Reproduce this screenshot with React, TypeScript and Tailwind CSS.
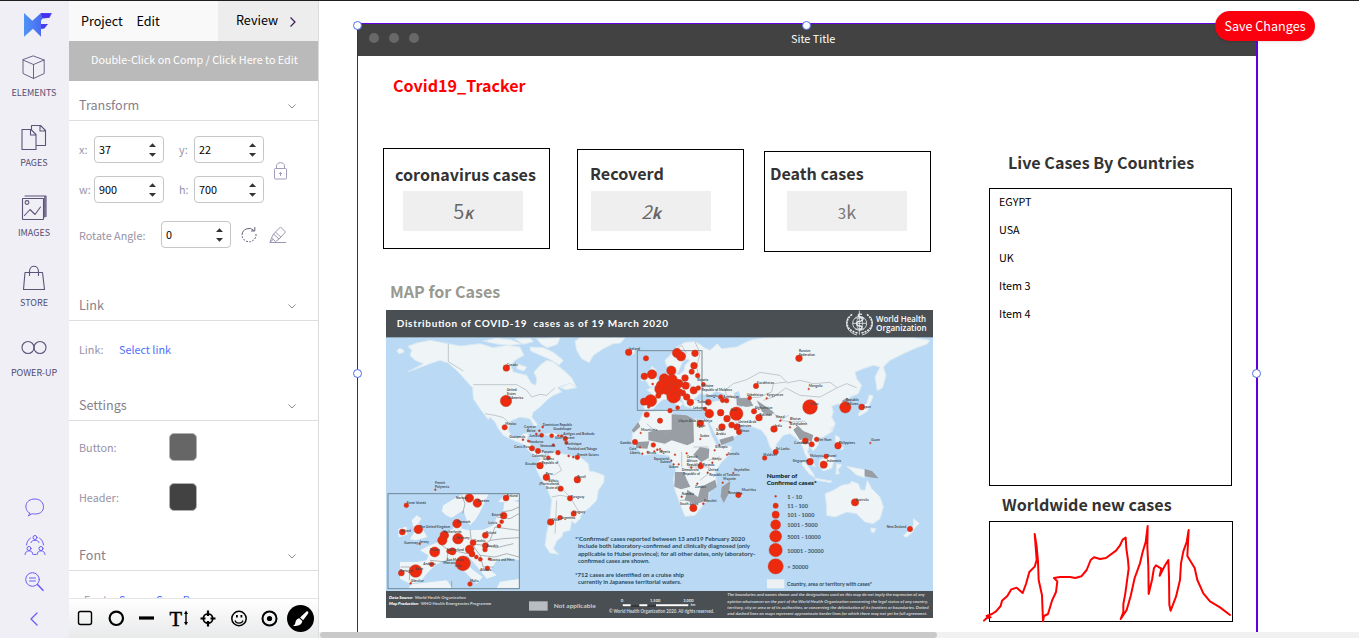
import type { ReactNode } from "react";

const FONT = "font-['Noto_Sans_CJK_SC','Noto_Sans',sans-serif]";

/* ---------- Sidebar ---------- */

function Logo() {
  return (
    <svg width="30" height="26" viewBox="0 0 90 78" className="ml-[6px] block">
      <defs>
        <linearGradient id="lg" x1="0" x2="1">
          <stop offset="0" stopColor="#4f93f5" />
          <stop offset=".6" stopColor="#4a6cf2" />
          <stop offset="1" stopColor="#4f8ff5" />
        </linearGradient>
      </defs>
      <path d="M3 3 L28 26 L44 12 L54 3 H87 L80 17 L58 20 L54 26 V36 H75 L64 50 L54 52 V74 L30 50 L3 74Z" fill="url(#lg)" />
      <path d="M54 4h31l-7 13H58z" fill="#4a2cf0" />
      <path d="M54 36h20l-10 12H54z" fill="#4a3cf2" />
    </svg>
  );
}

const ink = { fill: "none", stroke: "#5d5378", strokeWidth: 1.1, strokeLinejoin: "round", strokeLinecap: "round" } as const;

const NAV: { label: string; icon: ReactNode }[] = [
  {
    label: "ELEMENTS",
    icon: <path {...ink} strokeWidth=".9" d="M13.500 2 24.200 6V19.500L13.500 24.500 3 19.500V6ZM3 6 13.500 10.500 24.200 6M13.500 10.500V24.500" />,
  },
  {
    label: "PAGES",
    icon: (
      <path {...ink} d="M2 5.500H11L16 10.500V25.500H2ZM10.500 5.500V11H16M11.500 5V1.500H20.500L25.500 6.500V21.500H17M20 1.500V7H25.500" />
    ),
  },
  {
    label: "IMAGES",
    icon: (
      <g {...ink}>
        <rect x="2.500" y="4.500" width="21" height="21" rx=".5" />
        <path d="M5 2H26V22.500M24.700 3V23M4.500 21.500 10 15.500l5 5L20.500 13" />
        <circle cx="7" cy="8.500" r="1.900" />
      </g>
    ),
  },
  {
    label: "STORE",
    icon: <path {...ink} d="M5 8.500H22.500L24.500 25.500H3.500ZM9.500 11.500V7.500C9.500.500 18.500.500 18.500 7.500V11.500" />,
  },
  {
    label: "POWER-UP",
    icon: (
      <g {...ink}>
        <circle cx="8" cy="13.500" r="6" />
        <circle cx="20" cy="13.500" r="6" />
      </g>
    ),
  },
];

const blue = { fill: "none", stroke: "#6a5cf5", strokeWidth: 1, strokeLinejoin: "round", strokeLinecap: "round" } as const;

function Sidebar() {
  return (
    <aside className="flex w-[69px] shrink-0 flex-col items-center bg-[#f0eff6]">
      <div className="h-[50px] pt-[11px]">
        <Logo />
      </div>
      {NAV.map((n) => (
        <div key={n.label} className="flex h-[70px] w-full flex-col items-center pt-[3px] pr-[2px]">
          <svg width="28" height="28" viewBox="0 0 28 28">
            {n.icon}
          </svg>
          <span className="mt-[3px] pl-[1px] text-[9px] leading-[16px] text-[#554b70]">{n.label}</span>
        </div>
      ))}
      <div className="mt-auto flex flex-col items-center pb-[8px]">
        <svg width="22" height="22" viewBox="0 0 22 22" className="mb-[15px]">
          <path {...blue} d="M5.500 16.200C-.500 12.500.500 2 11 2c10.500 0 12 15 .5 15-1.800 0-3-.3-3.500-.3L4 19c1-.9 1.600-1.600 1.500-2.800Z" />
        </svg>
        <svg width="22" height="22" viewBox="0 0 22 22" className="mb-[15px] ml-px">
          <g {...blue}>
            <circle cx="11" cy="3.500" r="2" />
            <circle cx="5" cy="14.500" r="2" />
            <circle cx="17" cy="14.500" r="2" />
            <path d="M7 8.500c0-3 8-3 8 0M1 20.500c0-5 8-5 8 0M13 20.500c0-5 8-5 8 0M10 20.500h2M2.500 11C3 7 5 5 6.500 4M19.500 11c-.5-4-2.500-6-4-7" />
          </g>
        </svg>
        <svg width="22" height="22" viewBox="0 0 22 22" className="mb-[15px]">
          <g {...blue}>
            <circle cx="8.500" cy="8.500" r="6.800" />
            <path d="M5.500 7h6M5.500 10h6" />
            <path d="M13.500 13.500 19 19.300" strokeWidth="1.600" />
          </g>
        </svg>
        <svg width="22" height="22" viewBox="0 0 22 22">
          <path {...blue} strokeWidth="1.300" d="M13 5 7 11l6 6" />
        </svg>
      </div>
    </aside>
  );
}

/* ---------- Property panel ---------- */

function Section({ title }: { title: string }) {
  return (
    <div className="flex h-[40px] items-center justify-between border-b border-[#dedede] pt-[9px] pr-[21px] pl-[10px]">
      <span className="text-[12.600px] leading-[18px] text-[#85818c]">{title}</span>
      <svg width="10" height="8" viewBox="0 0 10 8" className="mt-px">
        <path d="M1.500 2.500 5 6 8.500 2.500" fill="none" stroke="#8d8a98" />
      </svg>
    </div>
  );
}

function Num({ value }: { value: string }) {
  return (
    <div className="flex h-[27px] w-[70px] items-center justify-between rounded-[4px] border border-[#c6c6c6] bg-white pr-[6px] pl-[4px]">
      <span className="text-[10.800px] text-black">{value}</span>
      <svg width="9" height="16" viewBox="0 0 9 16">
        <path d="M4.500 1.200 8 5H1ZM4.500 14.800 8 11H1Z" fill="#333" />
      </svg>
    </div>
  );
}

function Label({ children, className = "" }: { children: ReactNode; className?: string }) {
  return <span className={"text-[10.800px] leading-[16px] text-[#9793a8] " + className}>{children}</span>;
}

function Toolbar() {
  return (
    <div className="absolute bottom-0 left-0 flex h-[40px] w-[249px] items-start border-t border-[#e4e4e4] bg-linear-to-b from-white to-[#e8e9ea]">
      <svg width="249" height="39" viewBox="69 599 249 39">
        <g fill="none" stroke="#000">
          <rect x="78.500" y="611.500" width="13" height="13" rx="2" strokeWidth="1.400" />
          <circle cx="116.300" cy="618.300" r="6.700" strokeWidth="2.200" />
          <path d="M139 618h15" strokeWidth="3.200" />
          <path d="M186 612v12" strokeWidth="1.400" />
          <circle cx="208" cy="618.500" r="4.700" strokeWidth="1.700" />
          <path d="M208 610.500v5.500M208 621v5.500M200.500 618.500h5M210.500 618.500h5" strokeWidth="2.200" />
          <circle cx="239" cy="618.500" r="7.200" strokeWidth="1.500" />
          <path d="M235 620.500c1 3.500 7 3.500 8 0" strokeWidth="1.200" />
          <circle cx="269.500" cy="618.500" r="7" strokeWidth="2" />
        </g>
        <path d="M186 610.500l2 3.500h-4zM186 625.500l2-3.500h-4zM236 615h1.800v2.500H236zM240.500 615h1.800v2.500h-1.800z" />
        <circle cx="269.500" cy="618.500" r="2.600" />
        <text x="169.500" y="625.500" fontSize="20.500" fontFamily="Liberation Serif" stroke="#000" strokeWidth=".5">T</text>
        <circle cx="300.500" cy="618.500" r="13.500" />
        <path d="M307.800 611.500c1 .8.600 1.600 0 2.500l-4.700 6.200-3-2.700 5.800-5.500c.7-.6 1.200-.9 1.900-.5ZM299.300 618.200l3 2.900c0 3-3.800 5.800-9.300 4.700 2.800-1 2-3 3.100-5.200.7-1.300 1.800-2.200 3.200-2.400Z" fill="#fff" />
      </svg>
    </div>
  );
}

function Panel() {
  return (
    <section className="relative h-full w-[250px] shrink-0 overflow-hidden border-r border-[#dcdcdc] bg-white">
      <div className="flex h-[40px] bg-[#f9f9f9] text-[12.600px] text-black">
        <span className="w-[55px] pt-[10px] pl-[12px] leading-[20px]">Project</span>
        <span className="w-[94px] pt-[10px] pl-[12.500px] leading-[20px]">Edit</span>
        <div className="flex flex-1 items-start bg-[#ededed] pt-[9px] pl-[18px] leading-[20px]">
          Review
          <svg width="8" height="12" viewBox="0 0 8 12" className="mt-[6px] ml-[11px]">
            <path d="M1.500 1.500 6 6l-4.500 4.500" fill="none" stroke="#3d1a5c" strokeWidth="1.200" />
          </svg>
        </div>
      </div>
      <div className="flex h-[40px] items-center bg-[#bababa] pb-px pl-[22px] text-[10.750px] whitespace-nowrap text-white">
        <span>Double-Click on Comp / Click Here to Edit</span>
      </div>
      <Section title="Transform" />
      <div className="relative h-[160px] pt-[15px] pl-[10px]">
        <div className="flex h-[27px] items-center">
          <Label className="w-[15px] pb-[2px]">x:</Label>
          <Num value="37" />
          <Label className="ml-[15px] w-[15px] pb-[2px]">y:</Label>
          <Num value="22" />
        </div>
        <div className="mt-[13px] flex h-[27px] items-center">
          <Label className="w-[15px] pb-[2px]">w:</Label>
          <Num value="900" />
          <Label className="ml-[15px] w-[15px] pb-[2px]">h:</Label>
          <Num value="700" />
        </div>
        <div className="mt-[18px] flex h-[27px] items-center">
          <Label className="w-[82px] pt-[1px]">Rotate Angle:</Label>
          <Num value="0" />
          <svg width="18" height="18" viewBox="0 0 18 18" className="ml-[9px]" fill="none" stroke="#66637a">
            <path d="M2 9a7 7 0 0 1 12-4.500M14.800 1V5H11" />
            <path d="M16 8a7 7 0 0 1-14 1.500" strokeDasharray="2 1.200" />
          </svg>
          <svg width="18" height="18" viewBox="0 0 18 18" className="ml-[11px]" fill="none" stroke="#9b96b2">
            <path d="M11.500 1 16.500 6 10 13 4.500 8ZM6.500 6.200 12 11.200M4.500 8 2.500 12l4 3.500L10 13M2.500 12 .800 16.500h16.500M1 16.200 4.500 13" />
          </svg>
        </div>
        <svg width="15" height="20" viewBox="0 0 15 20" className="absolute top-[40px] left-[204px]" fill="none" stroke="#a29dba">
          <rect x="1.500" y="7.500" width="12" height="10.500" rx="1" />
          <path d="M3.500 7.500V5C3.500.500 11.500.500 11.500 5v2.500M7.500 11v4M6 12.500h3" />
        </svg>
      </div>
      <Section title="Link" />
      <div className="flex h-[60px] items-start pt-[20px] pl-[10px]">
        <Label className="w-[40px]">Link:</Label>
        <span className="text-[10.800px] leading-[16px] text-[#4c6fff]">Select link</span>
      </div>
      <Section title="Settings" />
      <div className="h-[110px] pt-[12px] pl-[10px]">
        <div className="flex h-[28px] items-center">
          <Label className="w-[90px]">Button:</Label>
          <div className="size-[28px] rounded-[5px] border border-[#b0b0b0] bg-[#666]" />
        </div>
        <div className="mt-[22px] flex h-[28px] items-center">
          <Label className="w-[90px]">Header:</Label>
          <div className="size-[28px] rounded-[5px] border border-[#b0b0b0] bg-[#424242]" />
        </div>
      </div>
      <Section title="Font" />
      <div className="flex items-start pt-[20px] pl-[15px]">
        <Label className="w-[35px]">Font:</Label>
        <span className="text-[10.800px] leading-[16px] text-[#4c6fff]">Source Sans Pro</span>
      </div>
      <Toolbar />
    </section>
  );
}

/* ---------- World map ---------- */

const LAND = [
  "M50 152l8-8 12 4 2 8-14 4zM95 150L84 138 110 128 150 120 205 130 240 137 300 130 340 142 380 135 420 140 432 165 405 180 392 195 400 215 440 225 455 250 468 255 470 235 462 215 480 195 500 180 520 185 545 205 560 218 575 233 590 262 560 252 532 262 545 275 520 285 500 300 480 320 460 335 455 350 472 372 465 382 450 355 420 350 390 362 385 390 395 410 415 415 430 400 447 398 440 420 452 432 455 450 475 458 490 455 500 470 488 480 475 470 450 455 430 432 400 420 370 405 355 385 345 365 330 350 325 358 315 345 300 325 280 295 278 262 262 245 235 215 205 188 180 180 150 190 110 205 85 214 130 190 105 180 90 165z",
  "M470 488L490 470 520 455 545 460 580 468 600 470 625 490 628 512 645 515 672 525 672 545 655 570 650 600 630 620 605 640 600 655 585 670 575 662 570 690 550 695 545 710 530 722 520 745 536 762 510 758 495 735 500 700 510 650 515 600 500 560 480 530 468 505z",
  "M585 122L600 112 735 112 722 128 700 130 670 145 640 165 628 187 605 175 590 150z",
  "M310 122l40-8 45 5 30 12-35 4-40-4zM405 116l45-2 10 10-30 8zM470 115l70-3-8 20-30 10-20-12zM450 140l40 2 30 14 30 24-12 14-30-18-34-14-22-10zM410 190l30 10-8 12-20-6zM540 262l30-14 18 14-30 6z",
  "M734 158l14-10 16 2-2 10-18 6z",
  "M795 235l10-12 10-25 12 10-4 14 12 22-6 12-20 4zM785 228l12-4 0 14-12 4z",
  "M786 310L792 295 818 297 815 280 800 268 825 258 850 240 858 225 862 215 875 222 900 222 912 210 915 195 930 180 915 175 905 190 895 215 885 222 875 195 860 198 855 180 870 165 890 140 915 126 945 124 960 132 972 142 990 150 1012 130 1025 145 1070 140 1110 120 1150 113 1210 112 1600 112 1650 120 1640 132 1610 142 1570 160 1530 180 1510 200 1518 225 1508 262 1492 272 1485 230 1500 200 1480 195 1450 205 1425 215 1430 235 1445 255 1435 280 1410 290 1400 305 1405 335 1395 338 1387 315 1375 310 1355 318 1360 335 1355 350 1366 370 1355 395 1330 410 1310 415 1316 432 1300 452 1288 438 1282 455 1298 480 1306 500 1290 490 1275 460 1268 440 1258 422 1250 415 1230 400 1210 405 1190 430 1182 456 1170 440 1160 410 1145 390 1120 380 1090 378 1062 360 1075 380 1085 395 1060 412 1022 432 1010 410 995 380 978 350 974 330 940 325 925 315 935 300 970 302 1000 305 1010 300 990 285 960 280 948 292 935 300 930 322 915 318 905 295 895 290 880 285 895 300 910 310 898 320 880 305 862 295 845 300 832 312 820 325 795 328z",
  "M790 335L875 328 878 345 920 345 940 355 980 360 995 405 1010 435 1055 438 1050 460 1025 485 1005 515 1010 550 990 570 985 595 965 620 945 645 915 648 900 610 885 570 880 535 888 510 875 480 865 465 825 460 790 465 755 425 760 385 780 360z",
  "M1335 580L1360 570 1385 555 1410 550 1415 543 1435 550 1442 568 1455 570 1462 540 1475 565 1500 590 1510 620 1500 655 1480 670 1455 665 1430 640 1400 635 1365 650 1340 645 1340 615zM1472 683l16 2-6 12-8-2z",
  "M1600 655l18 14-14 14-8 14-16 14-10-4 18-20 12-10zM1320 478l25-12 20 8-10 30-25 8-14-16zM1265 478l18 18 16 22 6 14-18-12-20-26zM1306 534l50 8-4 5-46-8zM1370 490l16 4-12 14 4 12-10 2zM1366 405l12 6 4 24 10 8-8 6-18-16zM1400 498l30 6 24 4v24l-24-8zM1434 345l10-20 16-16 8-26 12 4-10 24-8 22-20 12zM1350 385l8-6-2 16zM1186 448l8 14-6 6-4-8z",
  "M490 402l30-4 20 8-20 2zM545 408l24 2 0 8-22-2z",
];

const GREY = [
  "M875 342L920 345 940 355 942 425 922 435 875 420 855 430 805 420 805 395 828 390 875 388z",
  "M755 390l20-25 6 14-20 18z",
  "M960 440l28 5-2 28-22 12-24-22z",
  "M885 515l26 0 10 24 10 20-28 8-20-8z",
  "M922 568l32 22 8-30 44-22 4 22-24 16-2 24-34 10-36-10z",
  "M1025 560l26-18-4 36-16 30-9-20z",
  "M1018 418l42-12 2 14-38 14z",
  "M1070 292l38 2 12 22-20 4-30-6z",
  "M1130 300l36 24 16 14-16 8-20-12z",
  "M1240 388l14-12 16 16 30 12-6 22-18-12-16 6z",
  "M1385 302l16-10 8 8-14 12z",
  "M1454 506l22 6 20 22-18-2-24-4z",
  "M768 425l40-2-6 22-34-2z",
];

const BORDERS = [
  "M205 130V184L250 212M280 253H410L440 270 455 290 480 282 500 285 525 262M315 340L345 345 370 352 390 370",
  "M1035 270L1060 250 1100 238 1140 216 1200 225 1220 245 1180 250 1175 275 1140 290 1080 295 1040 285zM1220 248L1260 240 1300 250 1350 246 1372 262 1320 290 1260 285 1215 262M1150 300L1180 290 1215 265M1225 345L1200 360 1240 365 1275 362M1150 340L1175 330 1190 350M1372 262L1400 250 1430 262",
  "M500 530L530 545 545 565 570 590 600 640M530 480L545 510 520 525M515 590L540 585 570 590M530 600L525 700M870 390L845 405M800 370L830 395M940 440H985M905 455V500M925 500H990M960 540L985 520M985 480L1020 470M900 600H930M945 124L960 160 950 200 960 240 990 260M890 145L905 135 920 160M900 240L930 250 940 275M865 240L870 280",
];

// [x, y, radius]
const CASES: number[][] = [
  [379, 203, 10], [378, 302, 17], [374, 381, 8], [456, 444, 8], [474, 452, 8], [485, 405, 6], [515, 406, 6], [556, 415, 7], [559, 427, 5], [520, 434, 4], [534, 457, 7], [505, 472, 6], [592, 471, 7], [480, 496, 10], [429, 418, 3], [445, 422, 3], [478, 391, 3], [488, 380, 3], [469, 401, 3], [545, 407, 4], [535, 406, 3], [580, 470, 3], [566, 467, 3],
  [499, 531, 10], [592, 538, 10], [542, 565, 8], [570, 594, 8], [581, 640, 8], [540, 652, 7], [512, 665, 10], [166, 568, 2.500],
  [746, 156, 10], [798, 174, 8], [793, 228, 10], [816, 222, 14], [818, 251, 3], [841, 266, 17], [792, 304, 11], [812, 301, 18], [806, 320, 4], [800, 343, 8], [840, 361, 8],
  [891, 158, 14], [903, 168, 14], [945, 159, 10], [874, 211, 14], [942, 196, 10], [935, 214, 8], [953, 226, 7], [853, 235, 15], [876, 238, 16], [915, 233, 10], [862, 265, 18], [896, 250, 13], [881, 287, 21], [855, 246, 16], [917, 256, 11], [908, 278, 9], [920, 290, 10], [941, 270, 11], [931, 306, 10], [955, 263, 7], [970, 252, 6], [898, 275, 10], [843, 255, 14], [885, 265, 14], [835, 286, 8],
  [870, 331, 7], [893, 322, 6], [985, 306, 9], [975, 326, 6], [988, 340, 13], [1022, 290, 7], [1028, 300, 7], [1040, 301, 7], [1022, 337, 10], [1069, 340, 20], [1041, 355, 10], [961, 369, 10], [1026, 380, 10], [1055, 374, 9], [1071, 380, 10], [1077, 395, 8], [1128, 257, 8], [1109, 293, 6], [1122, 333, 8], [1137, 352, 10], [1160, 294, 2.500], [1182, 386, 10], [1187, 455, 8], [1154, 473, 7], [1201, 361, 2.500], [1230, 366, 2.500], [1230, 381, 2.500], [1257, 174, 10], [1286, 266, 2.500], [1290, 320, 22], [1396, 321, 17], [1445, 320, 9], [1276, 422, 9], [1295, 432, 8], [1310, 417, 7], [1374, 436, 10], [1471, 428, 2.500], [1290, 484, 10], [1331, 493, 11], [1338, 468, 7],
  [765, 425, 8], [820, 434, 7], [962, 498, 8], [962, 491, 5], [940, 623, 11], [1075, 584, 8], [782, 398, 2.500], [780, 441, 2.500], [787, 460, 2.500], [803, 455, 2.500], [823, 453, 2.500], [832, 448, 3], [840, 446, 2.500], [845, 452, 2.500], [885, 463, 2.500], [920, 459, 2.500], [961, 416, 2.500], [1004, 450, 2.500], [1018, 434, 2.500], [1041, 463, 2.500], [874, 481, 2.500], [881, 492, 2.500], [896, 492, 2.500], [934, 502, 2.500], [997, 487, 2.500], [983, 517, 2.500], [952, 550, 2.500], [905, 589, 2.500], [970, 610, 3], [1028, 547, 2.500], [1060, 518, 2.500], [1084, 580, 2.500],
  [1425, 606, 11], [1590, 686, 8],
];

const INSET_LAND = [
  "M60 305L110 305 140 300 145 285 120 270 150 255 175 245 200 215 220 205 222 180 240 178 245 205 270 210 310 208 340 195 350 170 370 150 372 128 390 120 417 125 417 300 400 295 380 292 350 300 332 330 350 345 320 355 300 330 275 300 262 285 250 300 280 330 308 350 290 370 270 350 240 320 220 300 195 300 165 315 140 340 120 365 90 370 60 355z",
  "M185 152L190 135 215 120 245 102 325 102 312 130 300 155 285 180 270 195 260 180 250 150 215 172 198 165z",
  "M355 125L375 102H417V118L380 126z",
  "M95 180l15-15 15 10-10 12 15 23 12 20-34 10-18-4 14-22zM55 205l25-6 2 24-26 8z",
  "M85 384L95 372 200 360 218 384zM350 384l10-20 57-8v28zM228 262l8-4 0 20-8 6z",
];
const INSET_BORDERS =
  "M245 105L255 130 248 160M270 208L275 250 310 255 330 240 345 200M150 300L200 305 205 270 175 245M205 270L240 275 262 280M275 250L300 285 345 290 380 280 417 290M310 255L350 262 400 250M345 200L380 205 417 210M350 170L390 175 417 160M300 285L310 320 340 320M62 320H90L88 360M365 155L395 150 417 140M330 240L370 235 417 232M215 384V362";
const INSET_CASES: number[][] = [
  [268, 113, 13], [292, 128, 13], [378, 113, 9], [79, 135, 7], [231, 190, 13], [371, 166, 10], [365, 184, 6], [357, 197, 6], [67, 215, 9], [115, 207, 13], [193, 225, 13], [187, 240, 14], [234, 235, 16], [279, 247, 9], [316, 225, 9], [316, 256, 9], [315, 268, 7], [269, 267, 13], [276, 281, 9], [217, 273, 11], [207, 273, 7], [164, 275, 15], [155, 312, 7], [249, 309, 22], [107, 332, 19], [64, 338, 9], [322, 324, 7], [289, 290, 6], [301, 297, 6], [119, 250, 3], [92, 369, 3], [270, 371, 7], [328, 296, 4],
];

// [x, y, text]
const LABELS: [number, number, string][] = [
  [380, 196, "Canada"], [380, 272, "United"], [380, 284, "States"], [382, 297, "of America"], [376, 375, "Mexico"],
  [488, 377, "Dominican Republic"], [432, 383, "Cayman"], [440, 395, "Belize"], [520, 389, "Guadeloupe"], [550, 404, "Antigua and Barbuda"], [388, 412, "Guatemala"], [448, 411, "Jamaica"], [525, 417, "Saint Vincent"], [446, 428, "Honduras"], [555, 435, "Martinique"], [402, 444, "Costa Rica"], [480, 441, "Venezuela"], [562, 448, "Trinidad and Tobago"], [485, 457, "Panama"], [592, 466, "French Guiana"], [456, 471, "Colombia"], [488, 480, "Guyana"], [436, 493, "Ecuador"], [485, 491, "Republic of"],
  [497, 525, "Peru"], [592, 532, "Brazil"], [505, 545, "Bolivia"], [478, 555, "(Plurinational"], [498, 567, "State of)"], [572, 592, "Paraguay"], [578, 637, "Uruguay"], [515, 663, "Chile"], [542, 656, "Argentina"], [165, 550, "French"], [165, 562, "Polynesia"],
  [748, 150, "Iceland"], [1257, 156, "Russian"], [1257, 167, "Federation"], [1130, 251, "Kazakhstan"], [1286, 260, "Mongolia"], [1290, 313, "China"], [1398, 301, "Republic"], [1398, 314, "of Korea"], [1447, 323, "Japan"], [1100, 286, "Uzbekistan"], [1160, 288, "Kyrgyzstan"], [1124, 327, "Afghanistan"], [1138, 346, "Pakistan"], [1184, 380, "India"], [1188, 449, "Sri Lanka"], [1150, 467, "Maldives"], [1188, 354, "Nepal"], [1230, 358, "Bhutan"], [1230, 375, "Bangladesh"], [1242, 431, "Cambodia"], [1312, 421, "Viet Nam"], [1376, 430, "Philippines"], [1473, 422, "Guam"], [1238, 485, "Singapore"], [1340, 470, "Brunei"], [1290, 471, "Malaysia"], [1340, 486, "Indonesia"],
  [952, 241, "Estonia"], [965, 259, "Ukraine"], [965, 271, "Republic of Moldova"], [978, 290, "Georgia"], [1030, 294, "Azerbaijan"], [952, 307, "Turkey"], [940, 327, "Lebanon"], [1052, 333, "Iran"], [895, 366, "Libyan Arab Jamahiriya"], [950, 379, "Egypt"], [1075, 369, "United Arab"], [1075, 381, "Emirates"], [1080, 396, "Oman"], [1008, 392, "Saudi"], [1008, 404, "Arabia"], [960, 409, "Sudan"], [1006, 442, "Ethiopia"], [1043, 464, "Somalia"], [783, 391, "Mauritania"], [720, 431, "Gambia"], [748, 448, "Cote"], [750, 461, "Liberia"], [800, 461, "Ghana"], [838, 459, "Nigeria"], [822, 478, "Equatorial"], [840, 489, "Guinea"], [866, 502, "Gabon"], [920, 472, "Central"], [920, 484, "African"], [920, 497, "Republic"], [905, 512, "Democratic"], [910, 524, "Republic of"], [968, 497, "Rwanda"], [997, 480, "Kenya"], [985, 513, "United"], [988, 526, "Republic of Tanzania"], [1062, 511, "Seychelles"], [1030, 540, "Mayotte"], [1085, 573, "Mauritius"], [1045, 580, "Reunion"], [905, 584, "Namibia"], [900, 614, "South Africa"], [972, 604, "Eswatini"], [945, 563, "Zambia"],
  [1427, 601, "Australia"], [1520, 682, "New Zealand"],
  [80, 611, "Faroe Islands"], [228, 596, "Norway"], [292, 605, "Sweden"], [380, 590, "Finland"], [335, 648, "Estonia"], [325, 672, "Latvia"], [118, 684, "The United Kingdom"], [62, 695, "Ireland"], [230, 667, "Denmark"], [190, 699, "Netherlands"], [228, 715, "Germany"], [318, 700, "Poland"], [72, 731, "Guernsey"], [118, 729, "Jersey"], [282, 724, "Czechia"], [318, 739, "Slovakia"], [150, 753, "France"], [200, 753, "Switzerland"], [130, 793, "Andorra"], [200, 783, "San Marino"], [190, 791, "Monaco"], [225, 801, "Italy"], [330, 781, "Bosnia and Herz."], [60, 816, "Portugal"], [105, 810, "Spain"], [92, 846, "Gibraltar"], [270, 846, "Malta"], [300, 813, "Albania"],
];

// [y, radius, text, text width]
const LEGEND: [number, number, string, number][] = [
  [568, 3, "1 - 10", 44], [596, 8, "11 - 100", 62], [623, 11, "101 - 1000", 81], [653, 15, "1001 - 5000", 91], [688, 18, "5001 - 10000", 100], [729, 20, "10001 - 30000", 109], [778, 23, "> 30000", 63],
];

function Line({ x, y, w, s, children, fill = "#2b4a5c", weight = 700, italic = false }: { x: number; y: number; w: number; s: number; children: string; fill?: string; weight?: number; italic?: boolean }) {
  return (
    <text x={x} y={y} textLength={w} lengthAdjust="spacingAndGlyphs" fontSize={s} fontWeight={weight} fill={fill} fontStyle={italic ? "italic" : "normal"}>
      {children}
    </text>
  );
}

function WorldMap() {
  return (
    <svg width="547" height="308" viewBox="18 29 1641 924" fontFamily="Lato, sans-serif" className="block">
      <rect x="18" y="29" width="1641" height="924" fill="#b9d9f4" />
      <g fill="#eff5f7" stroke="#dceaf2" strokeWidth="3" strokeLinejoin="round">
        {LAND.map((d) => <path key={d} d={d} />)}
      </g>
      <path d="M990 285l18-12 26 8 4 14-20 6-30-2zM1062 278l14-6 8 26 2 24-14-6-4-20z" fill="#b9d9f4" />
      <g fill="#989ea4">
        {GREY.map((d) => <path key={d} d={d} />)}
      </g>
      <g fill="none" stroke="#a3a9ae" strokeWidth="1.800" strokeLinejoin="round">
        {BORDERS.map((d) => <path key={d} d={d} />)}
      </g>
      <rect x="772" y="151" width="194" height="179" fill="none" stroke="#7a8a94" strokeWidth="3" />
      <g fill="#ed2a0e" stroke="#b3442e" strokeWidth="1.500">
        {CASES.map(([x, y, r], i) => <circle key={i} cx={x} cy={y} r={r} />)}
      </g>

      <rect x="23" y="580" width="395" height="285" fill="#b9d9f4" />
      <g transform="translate(0 480)">
        <g fill="#eff5f7">
          {INSET_LAND.map((d) => <path key={d} d={d} />)}
        </g>
        <path d={INSET_BORDERS} fill="none" stroke="#7d858a" strokeWidth="1.800" />
        <g fill="#ed2a0e" stroke="#b3442e" strokeWidth="1.500">
          {INSET_CASES.map(([x, y, r], i) => <circle key={i} cx={x} cy={y} r={r} />)}
        </g>
      </g>
      <rect x="24" y="580" width="394" height="285" fill="none" stroke="#6f8796" strokeWidth="3" />

      <g fontSize="10" fill="#474d52" fontWeight="700">
        {LABELS.map(([x, y, t]) => (
          <text key={t + x} x={x} y={y}>{t}</text>
        ))}
      </g>

      <Line x={1160} y={532} w={92} s={18} fill="#111d24" weight={900}>Number of</Line>
      <Line x={1160} y={555} w={150} s={18} fill="#111d24" weight={900}>Confirmed cases*</Line>
      {LEGEND.map(([y, r, t, w]) => (
        <g key={t}>
          <circle cx="1187" cy={y + 20} r={r} fill="#ed2a0e" stroke="#b3442e" />
          <Line x={1222} y={y + 28} w={w} s={18} fill="#3d5563">{t}</Line>
        </g>
      ))}
      <rect x="1161" y="837" width="52" height="27" fill="#eef1f3" />
      <Line x={1221} y={857} w={255} s={17}>Country, area or territory with cases*</Line>

      <Line x={585} y={722} w={510} s={18}>*'Confirmed' cases reported between 13 and19 February 2020</Line>
      <Line x={594} y={744} w={516} s={18}>include both laboratory-confirmed and clinically diagnosed (only</Line>
      <Line x={594} y={766} w={532} s={18}>applicable to Hubei province); for all other dates, only laboratory-</Line>
      <Line x={594} y={787} w={215} s={18}>confirmed cases are shown.</Line>
      <Line x={585} y={831} w={327} s={18}>*712 cases are identified on a cruise ship</Line>
      <Line x={594} y={852} w={310} s={18}>currently in Japanese territorial waters.</Line>

      <rect x="18" y="29" width="1641" height="82" fill="#4a4f53" />
      <text x="50" y="81" fontSize="30" fontWeight="700" fill="#fff" textLength="814" lengthAdjust="spacing" style={{ whiteSpace: "pre" }}>
        {"Distribution of COVID-19  cases as of 19 March 2020"}
      </text>
      <g fill="none" stroke="#e9ecee" strokeWidth="3">
        <circle cx="1439" cy="69" r="21" strokeWidth="2.500" />
        <path d="M1438 31v72M1418 69h42M1426 53h26M1426 86h26" strokeWidth="2.500" />
        <path d="M1439 51a9 18 0 0 0 0 36a9 18 0 0 0 0-36" strokeWidth="2" />
        <path d="M1416 42c-28 22-14 52 18 56M1461 42c28 22 14 52-18 56" strokeWidth="5" strokeDasharray="6 3" />
        <path d="M1405 50c-14 28 2 48 26 54M1472 50c14 28-2 48-26 54" strokeWidth="2.500" />
        <path d="M1446 42c-14-4-14 8-4 9s9 11-4 12 -9 14 2 14 6 10-2 12" strokeWidth="4" />
      </g>
      <g fontFamily="Open Sans, sans-serif">
        <Line x={1488} y={65} w={150} s={25} fill="#fff" weight={600}>World Health</Line>
        <Line x={1488} y={92} w={152} s={25} fill="#fff" weight={600}>Organization</Line>
      </g>

      <rect x="18" y="872" width="1641" height="81" fill="#4a4f53" />
      <Line x={27} y={896} w={72} s={13} fill="#fff" weight={900} italic>Data Source:</Line>
      <Line x={104} y={896} w={154} s={13} fill="#d4d6d8">World Health Organization</Line>
      <Line x={27} y={915} w={90} s={13} fill="#fff" weight={900} italic>Map Production:</Line>
      <Line x={122} y={915} w={212} s={13} fill="#d4d6d8">WHO Health Emergencies Programme</Line>
      <rect x="447" y="903" width="56" height="28" fill="#b9bcc0" />
      <Line x={521} y={924} w={126} s={19} fill="#c9cbcd">Not applicable</Line>
      <g fontSize="13" fill="#e4e6e7" fontWeight="700">
        <text x="722" y="906">0</text>
        <Line x={810} y={906} w={31} s={12} fill="#e4e6e7">1,500</Line>
        <Line x={910} y={906} w={31} s={12} fill="#e4e6e7">3,000</Line>
        <text x="932" y="918" fontSize="10">km</text>
      </g>
      <path d="M726 917h200" stroke="#222" strokeWidth="3" />
      <path d="M728 915h24M778 915h24M828 915h97" stroke="#fff" strokeWidth="6" />
      <Line x={687} y={937} w={315} s={14} fill="#d4d6d8">© World Health Organization 2020. All rights reserved.</Line>
      <Line x={1042} y={888} w={592} s={12.500} fill="#d0d2d4" italic>The boundaries and names shown and the designations used on this map do not imply the expression of any</Line>
      <Line x={1042} y={907} w={602} s={12.500} fill="#d0d2d4" italic>opinion whatsoever on the part of the World Health Organization concerning the legal status of any country,</Line>
      <Line x={1042} y={925} w={604} s={12.500} fill="#d0d2d4" italic>territory, city or area or of its authorities, or concerning the delimitation of its frontiers or boundaries. Dotted</Line>
      <Line x={1042} y={943} w={600} s={12.500} fill="#d0d2d4" italic>and dashed lines on maps represent approximate border lines for which there may not yet be full agreement.</Line>
    </svg>
  );
}

/* ---------- Canvas ---------- */

function Trend() {
  return (
    <svg width="255" height="110" viewBox="30 120 765 330" className="absolute top-[519px] left-[661px]">
      <path
        d="M42 422L50 414 62 412 50 408 66 402 78 394 92 378 96 362 112 348 124 328 140 323 158 339 168 312 178 276 194 260 200 240 194 162 200 200 204 245 206 300 216 346 219 424 222 408 234 402 246 362 258 336 262 304 252 294 270 291 300 291 316 294 334 289 350 270 362 240 372 232 390 237 408 234 438 212 450 196 458 179 467 173 469 205 474 240 476 266 466 340 460 372 460 396 452 417 470 390 482 348 494 294 510 250 518 216 527 186 533 138 532 200 535 260 536 342 546 300 552 264 558 256 574 266 569 287 584 258 595 240 597 290 598 374 602 392 618 350 630 300 633 250 640 214 650 186 656 150 652 228 674 264 682 300 700 340 720 364 750 382 780 405"
        fill="none" stroke="#f00" strokeWidth="6" strokeLinejoin="round" strokeLinecap="round"
      />
    </svg>
  );
}

const HANDLES = ["left-[34px] top-[20px]", "left-[483px] top-[20px]", "left-[34px] top-[368px]", "left-[933px] top-[368px]"];

function Canvas() {
  const h = "absolute whitespace-nowrap font-bold text-[16.100px] leading-[24px] text-[#333] ";
  return (
    <main className="relative flex-1 overflow-hidden bg-white">
      <div className="absolute top-[22px] left-[38px] h-[700px] w-[901px] border-t border-r-2 border-l border-[#5f00e4] bg-white">
        <div className="flex h-[32px] items-center bg-[#424242]">
          <div className="flex w-[60px] gap-[10px] pb-[4px] pl-[10.500px]">
            <i className="size-[10px] shrink-0 rounded-full bg-[#686868]" />
            <i className="size-[10px] shrink-0 rounded-full bg-[#686868]" />
            <i className="size-[10px] shrink-0 rounded-full bg-[#686868]" />
          </div>
          <span className="ml-[373px] pb-[5px] text-[10.800px] leading-[16px] text-white">Site Title</span>
        </div>
      </div>

      <div className={h + "top-[72px] left-[74px] !text-[#f00]"}>Covid19_Tracker</div>

      <div className="absolute top-[147px] left-[64px] h-[101px] w-[167px] border border-black" />
      <div className="absolute top-[148px] left-[258px] h-[101px] w-[167px] border border-black" />
      <div className="absolute top-[150px] left-[445px] h-[101px] w-[167px] border border-black" />
      <div className={h + "top-[161px] left-[76px]"}>coronavirus cases</div>
      <div className={h + "top-[160px] left-[271px]"}>Recoverd</div>
      <div className={h + "top-[160px] left-[451px]"}>Death cases</div>
      <div className="absolute top-[190px] left-[84px] flex h-[40px] w-[120px] items-baseline justify-center bg-[#efefef] leading-[40px] text-[#666]">
        <span className="text-[20px] font-[350]">5</span>
        <b className="text-[12.500px] italic">K</b>
      </div>
      <div className="absolute top-[190px] left-[272px] flex h-[40px] w-[120px] items-baseline justify-center bg-[#efefef] leading-[40px] text-[#666] italic">
        <span className="text-[19px] font-[350]">2</span>
        <b className="text-[15px]">k</b>
      </div>
      <div className="absolute top-[190px] left-[468px] flex h-[40px] w-[120px] items-baseline justify-center bg-[#efefef] leading-[40px] text-[#777]">
        <span className="text-[15px]">3</span>
        <span className="text-[18px]">k</span>
      </div>

      <div className={h + "top-[278px] left-[71px] !text-[#999990]"}>MAP for Cases</div>
      <div className="absolute top-[309px] left-[67px]">
        <WorldMap />
      </div>

      <div className={h + "top-[149px] left-[689px]"}>Live Cases By Countries</div>
      <div className="absolute top-[187px] left-[670px] h-[298px] w-[243px] border border-black pl-[9px] text-[10.800px] leading-[28px] text-black">
        <div className="-mt-[2px]">
          {["EGYPT", "USA", "UK", "Item 3", "Item 4"].map((t) => (
            <div key={t}>{t}</div>
          ))}
        </div>
      </div>
      <div className={h + "top-[491px] left-[683px]"}>Worldwide new cases</div>
      <div className="absolute top-[520px] left-[670px] h-[101px] w-[244px] border border-black" />
      <Trend />

      {HANDLES.map((c) => (
        <div key={c} className={"absolute size-[9px] rounded-full border border-[#4c6fe8] bg-white " + c} />
      ))}
      <button className="absolute top-[10px] left-[896px] h-[30px] w-[100px] rounded-full bg-[#fa000f] text-[12.600px] leading-[30px] text-white shadow-sm">
        Save Changes
      </button>
      <div className="absolute inset-x-0 bottom-0 h-[6px] bg-[#f1f1f1]">
        <div className="ml-[1px] h-[6px] w-[617px] rounded-full bg-[#c9c9c9]" />
      </div>
    </main>
  );
}

export default function App() {
  return (
    <div className={"flex h-[638px] w-[1359px] overflow-hidden border-t border-[#1f1f1f] bg-white " + FONT}>
      <Sidebar />
      <Panel />
      <Canvas />
    </div>
  );
}
